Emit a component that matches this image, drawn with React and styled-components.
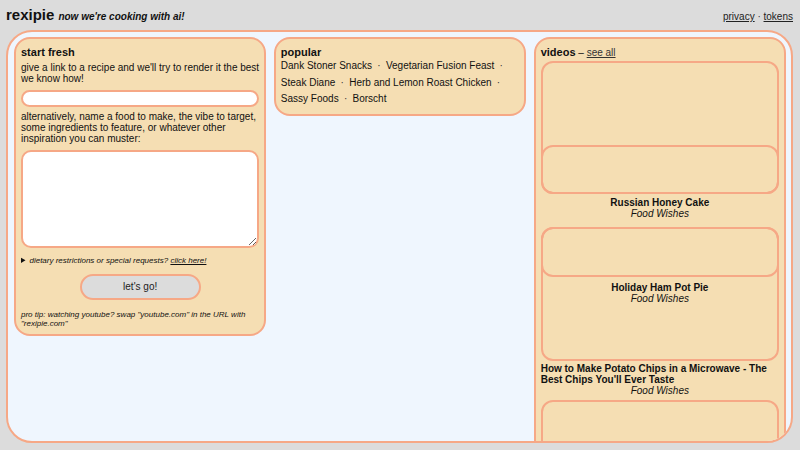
import React from "react";
import styled, { createGlobalStyle } from "styled-components";

const SALMON = "#f6a886";
const WHEAT = "#f5deb3";

const Global = createGlobalStyle`
  html, body {
    margin: 0;
    padding: 0;
    background: #dcdcdc;
  }
  body {
    font-family: "Liberation Sans", Arial, sans-serif;
    font-size: 10px;
    color: #111;
  }
  * { box-sizing: border-box; }
`;

const Page = styled.div`
  height: 450px;
  padding: 6px 7px 7px 6px;
  display: flex;
  flex-direction: column;
`;

const TopBar = styled.header`
  display: flex;
  align-items: baseline;
  justify-content: space-between;
`;

const BrandGroup = styled.div`
  display: flex;
  align-items: baseline;
  gap: 4px;
`;

const Brand = styled.span`
  font-size: 15px;
  font-weight: bold;
`;

const Tagline = styled.span`
  font-size: 10px;
  font-weight: bold;
  font-style: italic;
`;

const NavLinks = styled.nav`
  font-size: 10px;
  color: #333;
  a { color: #222; text-decoration: underline; }
`;

const Shell = styled.main`
  flex: 1;
  margin-top: 6.5px;
  border: 2px solid ${SALMON};
  border-radius: 26px;
  background: #eff6fe;
  overflow: hidden;
  padding: 5px 5px 0 6px;
  display: grid;
  grid-template-columns: repeat(3, 1fr);
  column-gap: 7.5px;
  align-items: start;
`;

const Panel = styled.section`
  background: ${WHEAT};
  border: 2px solid ${SALMON};
  border-radius: 16px;
  padding: 7px 5px 6px;
`;

const Heading = styled.h2`
  margin: 0;
  font-size: 11px;
  font-weight: bold;
  display: inline;
`;

const HeadRow = styled.div`
  line-height: normal;
`;

const Intro = styled.p`
  margin: 4px 0 0;
  font-size: 10px;
`;

const UrlInput = styled.input`
  display: block;
  width: 100%;
  height: 17px;
  margin: 6px 0 4px;
  border: 2px solid ${SALMON};
  border-radius: 9px;
  background: #fff;
  outline: none;
`;

const Prompt = styled.textarea`
  display: block;
  width: 100%;
  height: 98px;
  margin: 6px 0 8px;
  border: 2px solid ${SALMON};
  border-radius: 10px;
  background: #fff;
  resize: vertical;
  outline: none;
`;

const Extras = styled.details`
  font-size: 8px;
  font-style: italic;
  summary { cursor: pointer; }
  a { color: #111; text-decoration: underline; }
`;

const GoButton = styled.button`
  display: block;
  width: 121px;
  height: 26px;
  margin: 9px auto 10px;
  border: 2px solid ${SALMON};
  border-radius: 13px;
  background: #dcdcdc;
  font-family: inherit;
  font-size: 10px;
  color: #222;
`;

const ProTip = styled.p`
  margin: 0;
  font-size: 8px;
  font-style: italic;
`;

const PopularList = styled.div`
  margin-top: 0.5px;
  line-height: 16.7px;
  font-size: 10px;
`;

const Dish = styled.a`
  color: #111;
  text-decoration: none;
`;

const Sep = styled.span`
  margin: 0 2.5px;
  color: #333;
`;

const SeeAll = styled.a`
  font-size: 10px;
  color: #333;
  text-decoration: underline;
`;

const Dash = styled.span`
  font-size: 10px;
`;

const VideoColumn = styled.div`
  margin-top: 3.7px;
  display: flex;
  flex-direction: column;
`;

const Frame = styled.div`
  height: ${(p) => p.$h}px;
  border: 2px solid ${SALMON};
  border-radius: 12px;
  display: flex;
  flex-direction: column;
  justify-content: ${(p) => (p.$thumbAt === "bottom" ? "flex-end" : "flex-start")};
  flex-shrink: 0;
`;

const Thumb = styled.div`
  height: ${(p) => p.$h}px;
  margin: -2px;
  border: 2px solid ${SALMON};
  border-radius: 12px;
  flex-shrink: 0;
`;

const Caption = styled.div`
  display: flex;
  flex-direction: column;
  align-items: center;
  margin: ${(p) => p.$m};
`;

const VideoTitle = styled.div`
  font-weight: bold;
  font-size: 10px;
  text-align: left;
`;

const Channel = styled.div`
  font-style: italic;
  font-size: 10px;
`;

const popular = [
  "Dank Stoner Snacks",
  "Vegetarian Fusion Feast",
  "Steak Diane",
  "Herb and Lemon Roast Chicken",
  "Sassy Foods",
  "Borscht",
];

function VideoCaption({ title, channel, m }) {
  return (
    <Caption $m={m}>
      <VideoTitle>{title}</VideoTitle>
      <Channel>{channel}</Channel>
    </Caption>
  );
}

export default function App() {
  return (
    <>
      <Global />
      <Page>
        <TopBar>
          <BrandGroup>
            <Brand>rexipie</Brand>
            <Tagline>now we're cooking with ai!</Tagline>
          </BrandGroup>
          <NavLinks>
            <a href="#">privacy</a> · <a href="#">tokens</a>
          </NavLinks>
        </TopBar>
        <Shell>
          <Panel>
            <HeadRow>
              <Heading>start fresh</Heading>
            </HeadRow>
            <Intro>give a link to a recipe and we'll try to render it the best we know how!</Intro>
            <UrlInput type="text" />
            <Intro>
              alternatively, name a food to make, the vibe to target, some ingredients to feature, or whatever other inspiration you can muster:
            </Intro>
            <Prompt />
            <Extras>
              <summary>
                dietary restrictions or special requests? <a href="#">click here!</a>
              </summary>
            </Extras>
            <GoButton>let's go!</GoButton>
            <ProTip>pro tip: watching youtube? swap "youtube.com" in the URL with "rexipie.com"</ProTip>
          </Panel>

          <Panel>
            <HeadRow>
              <Heading>popular</Heading>
            </HeadRow>
            <PopularList>
              {popular.map((d, i) => (
                <React.Fragment key={d}>
                  <Dish href="#">{d}</Dish>
                  {i < popular.length - 1 && <Sep> · </Sep>}{" "}
                </React.Fragment>
              ))}
            </PopularList>
          </Panel>

          <Panel>
            <HeadRow>
              <Heading>videos</Heading>
              <Dash> – </Dash>
              <SeeAll href="#">see all</SeeAll>
            </HeadRow>
            <VideoColumn>
              <Frame $h={133} $thumbAt="bottom">
                <Thumb $h={49} />
              </Frame>
              <VideoCaption m="3px 0 8px" title="Russian Honey Cake" channel="Food Wishes" />
              <Frame $h={134} $thumbAt="top">
                <Thumb $h={50} />
                <VideoCaption m="7px 0 0" title="Holiday Ham Pot Pie" channel="Food Wishes" />
              </Frame>
              <VideoCaption
                m="1.5px 0 4px"
                title="How to Make Potato Chips in a Microwave - The Best Chips You'll Ever Taste"
                channel="Food Wishes"
              />
              <Frame $h={133} $thumbAt="top" />
            </VideoColumn>
          </Panel>
        </Shell>
      </Page>
    </>
  );
}
